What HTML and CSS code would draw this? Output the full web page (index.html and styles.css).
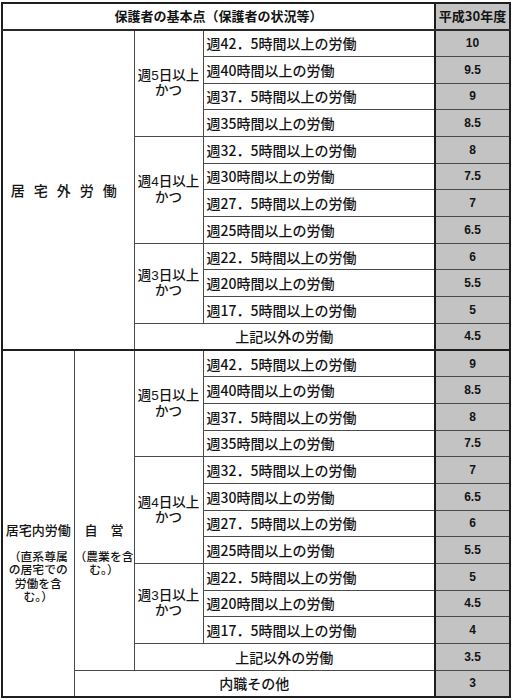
FILE: index.html
```html
<!DOCTYPE html>
<html lang="ja">
<head>
<meta charset="utf-8">
<title>保護者の基本点</title>
<link rel="stylesheet" href="styles.css">
</head>
<body>
<table class="sheet">
  <colgroup>
    <col class="c-a"><col class="c-b"><col class="c-c"><col class="c-d"><col class="c-e">
  </colgroup>
  <tr class="head">
    <th colspan="4">保護者の基本点（保護者の状況等）</th>
    <th class="val">平成30年度</th>
  </tr>
  <tr>
    <td rowspan="12" colspan="2" class="outside">居宅外労働</td>
    <td rowspan="4" class="days">週5日以上<br>かつ</td>
    <td class="hours">週42．5時間以上の労働</td><td class="val">10</td>
  </tr>
  <tr><td class="hours">週40時間以上の労働</td><td class="val">9.5</td></tr>
  <tr><td class="hours">週37．5時間以上の労働</td><td class="val">9</td></tr>
  <tr><td class="hours">週35時間以上の労働</td><td class="val">8.5</td></tr>
  <tr>
    <td rowspan="4" class="days">週4日以上<br>かつ</td>
    <td class="hours">週32．5時間以上の労働</td><td class="val">8</td>
  </tr>
  <tr><td class="hours">週30時間以上の労働</td><td class="val">7.5</td></tr>
  <tr><td class="hours">週27．5時間以上の労働</td><td class="val">7</td></tr>
  <tr><td class="hours">週25時間以上の労働</td><td class="val">6.5</td></tr>
  <tr>
    <td rowspan="3" class="days">週3日以上<br>かつ</td>
    <td class="hours">週22．5時間以上の労働</td><td class="val">6</td>
  </tr>
  <tr><td class="hours">週20時間以上の労働</td><td class="val">5.5</td></tr>
  <tr><td class="hours">週17．5時間以上の労働</td><td class="val">5</td></tr>
  <tr><td colspan="2" class="other">上記以外の労働</td><td class="val">4.5</td></tr>

  <tr class="section">
    <td rowspan="13" class="inside">
      <div class="label">居宅内労働</div>
      <div class="note">（直系尊属<br>の居宅での<br>労働を含<br>む。）</div>
    </td>
    <td rowspan="12" class="inside">
      <div class="label">自　営</div>
      <div class="note">（農業を含<br>む。）</div>
    </td>
    <td rowspan="4" class="days">週5日以上<br>かつ</td>
    <td class="hours">週42．5時間以上の労働</td><td class="val">9</td>
  </tr>
  <tr><td class="hours">週40時間以上の労働</td><td class="val">8.5</td></tr>
  <tr><td class="hours">週37．5時間以上の労働</td><td class="val">8</td></tr>
  <tr><td class="hours">週35時間以上の労働</td><td class="val">7.5</td></tr>
  <tr>
    <td rowspan="4" class="days">週4日以上<br>かつ</td>
    <td class="hours">週32．5時間以上の労働</td><td class="val">7</td>
  </tr>
  <tr><td class="hours">週30時間以上の労働</td><td class="val">6.5</td></tr>
  <tr><td class="hours">週27．5時間以上の労働</td><td class="val">6</td></tr>
  <tr><td class="hours">週25時間以上の労働</td><td class="val">5.5</td></tr>
  <tr>
    <td rowspan="3" class="days">週3日以上<br>かつ</td>
    <td class="hours">週22．5時間以上の労働</td><td class="val">5</td>
  </tr>
  <tr><td class="hours">週20時間以上の労働</td><td class="val">4.5</td></tr>
  <tr><td class="hours">週17．5時間以上の労働</td><td class="val">4</td></tr>
  <tr><td colspan="2" class="other">上記以外の労働</td><td class="val">3.5</td></tr>
  <tr><td colspan="3" class="other">内職その他</td><td class="val">3</td></tr>
</table>
</body>
</html>
```

FILE: styles.css
```css
html, body {
  margin: 0;
  padding: 0;
  background: #ffffff;
}

body {
  font-family: "Noto Sans CJK JP", "Noto Sans", sans-serif;
  color: #141414;
}

.sheet {
  border-collapse: collapse;
  table-layout: fixed;
  width: 510px;
  margin: 2px 0 0 1px;
  border: 2px solid #1e1e1e;
}

.c-a { width: 72px; }
.c-b { width: 60px; }
.c-c { width: 69px; }
.c-d { width: 232px; }
.c-e { width: 75px; }

.sheet tr {
  height: 26.7px;
}

.sheet td,
.sheet th {
  border: 1px solid #4a4a4a;
  padding: 0;
  font-size: 14px;
  font-weight: 500;
  line-height: 14px;
  vertical-align: middle;
  white-space: nowrap;
}

.head th {
  font-size: 13px;
  font-weight: 700;
  text-align: center;
  border-bottom: 2px solid #2a2a2a;
}

.sheet .val {
  background: #c3c3c3;
  border-left: 2px solid #1e1e1e;
  text-align: center;
  font-family: "Liberation Sans", Arial, sans-serif;
  font-weight: 700;
  font-size: 12px;
}

.head .val {
  font-family: "Noto Sans CJK JP", sans-serif;
  font-size: 13px;
}

.outside {
  text-align: center;
  font-size: 13px;
  letter-spacing: 9px;
  padding-left: 9px;
}

/* compact multi-line labels: Latin primary font keeps line boxes tight,
   CJK glyphs come from Noto Sans CJK JP */
.sheet .days,
.note {
  font-family: "Liberation Sans", "Noto Sans CJK JP", sans-serif;
}

.sheet .days {
  text-align: center;
  font-size: 13.5px;
  line-height: 15.5px;
}

.sheet .hours {
  padding-left: 3px;
  text-align: left;
}

.other {
  text-align: center;
}

.section td {
  border-top: 2px solid #1e1e1e;
}

.sheet .inside {
  vertical-align: top;
  text-align: center;
  padding-top: 172px;
  font-size: 13px;
}

.label {
  line-height: 14px;
}

.note {
  margin-top: 14px;
  line-height: 13.5px;
  font-size: 11.8px;
}
```
